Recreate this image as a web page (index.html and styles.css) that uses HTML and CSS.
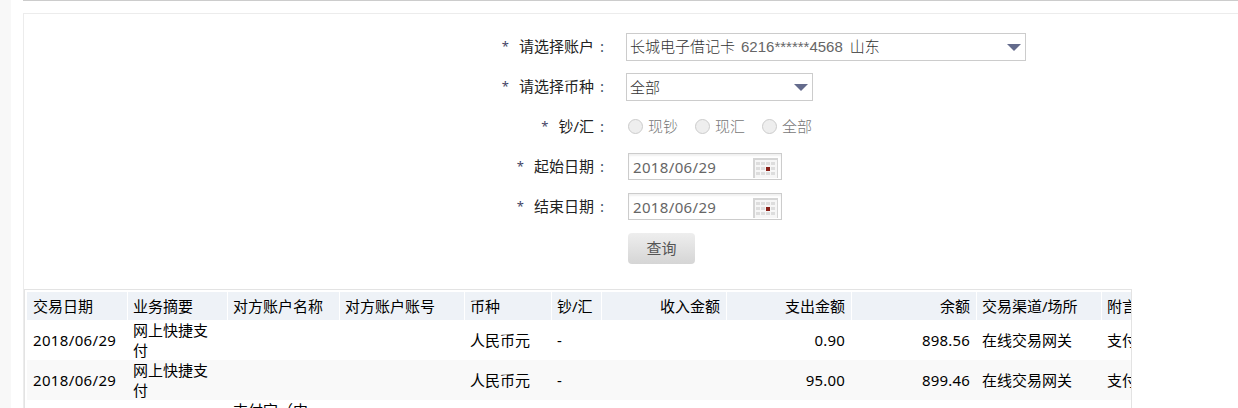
FILE: index.html
```html
<!DOCTYPE html>
<html lang="zh-CN">
<head>
<meta charset="utf-8">
<title>交易查询</title>
<link rel="stylesheet" href="styles.css">
</head>
<body>
<div class="page">
  <main class="content">
    <section class="panel">
      <form class="query">
        <div class="row"><div class="label"><span class="star">*</span><span class="name">请选择账户</span><span class="colon">:</span></div>
          <div class="select wide"><span class="value">长城电子借记卡<span class="digits">6216******4568</span>山东</span><svg class="arrow" width="14" height="7" viewBox="0 0 14 7"><path d="M0 0H14L7 7Z"/></svg></div></div>
        <div class="row"><div class="label"><span class="star">*</span><span class="name">请选择币种</span><span class="colon">:</span></div>
          <div class="select narrow"><span class="value">全部</span><svg class="arrow" width="14" height="7" viewBox="0 0 14 7"><path d="M0 0H14L7 7Z"/></svg></div></div>
        <div class="row"><div class="label"><span class="star">*</span><span class="name">钞/汇</span><span class="colon">:</span></div>
          <div class="radios"><span class="option"><i class="radio"></i>现钞</span><span class="option"><i class="radio"></i>现汇</span><span class="option"><i class="radio"></i>全部</span></div></div>
        <div class="row"><div class="label"><span class="star">*</span><span class="name">起始日期</span><span class="colon">:</span></div>
          <div class="date"><span>2018/06/29</span><svg class="calendar" width="25" height="20" viewBox="0 0 25 20"><path class="frame" d="M0 0H25V20H0Z"/><path class="sheet" d="M2 2H24V20H2Z"/><path class="days" d="M3 4h4v3H3zM8 4h4v3H8zM13 4h4v3h-4zM18 4h4v3h-4zM3 9h4v3H3zM8 9h4v3H8zM18 9h4v3h-4zM3 14h4v3H3zM8 14h4v3H8zM13 14h4v3h-4zM18 14h4v3h-4z"/><path class="today" d="M13 9h4v4h-4z"/></svg></div></div>
        <div class="row"><div class="label"><span class="star">*</span><span class="name">结束日期</span><span class="colon">:</span></div>
          <div class="date"><span>2018/06/29</span><svg class="calendar" width="25" height="20" viewBox="0 0 25 20"><path class="frame" d="M0 0H25V20H0Z"/><path class="sheet" d="M2 2H24V20H2Z"/><path class="days" d="M3 4h4v3H3zM8 4h4v3H8zM13 4h4v3h-4zM18 4h4v3h-4zM3 9h4v3H3zM8 9h4v3H8zM18 9h4v3h-4zM3 14h4v3H3zM8 14h4v3H8zM13 14h4v3h-4zM18 14h4v3h-4z"/><path class="today" d="M13 9h4v4h-4z"/></svg></div></div>
        <div class="row"><div class="label"></div><button class="submit" type="button">查询</button></div>
      </form>
      <div class="results">
        <table class="grid">
          <colgroup><col class="w101"><col class="w100"><col class="w112"><col class="w125"><col class="w87"><col class="w50"><col class="w125"><col class="w125"><col class="w125"><col class="w125"><col class="w125"></colgroup>
          <thead><tr><th>交易日期</th><th>业务摘要</th><th>对方账户名称</th><th>对方账户账号</th><th>币种</th><th>钞/汇</th><th class="num">收入金额</th><th class="num">支出金额</th><th class="num">余额</th><th>交易渠道/场所</th><th>附言</th></tr></thead>
          <tbody>
            <tr><td class="day">2018/06/29</td><td>网上快捷支付</td><td></td><td></td><td>人民币元</td><td>-</td><td></td><td class="num">0.90</td><td class="num">898.56</td><td>在线交易网关</td><td>支付</td></tr>
            <tr class="alt"><td class="day">2018/06/29</td><td>网上快捷支付</td><td></td><td></td><td>人民币元</td><td>-</td><td></td><td class="num">95.00</td><td class="num">899.46</td><td>在线交易网关</td><td>支付</td></tr>
            <tr><td></td><td></td><td class="payee">支付宝（中</td><td></td><td></td><td></td><td></td><td></td><td></td><td></td><td></td></tr>
          </tbody>
        </table>
      </div>
    </section>
  </main>
</div>
</body>
</html>
```
FILE: styles.css
```css
* { box-sizing: border-box; }
body { margin: 0; background: #fff; color: #333; font: 15px/20px "Noto Sans", "Noto Sans CJK SC", sans-serif; }
.page { height: 408px; overflow: hidden; border-left: 11px solid #f8f8f8; padding-left: 12px; }
.content { border-top: 1px solid #ccc; padding-top: 12px; }
.panel { height: 420px; border: solid #ececec; border-width: 1px 0 0 1px; padding-top: 13px; }
.query { height: 262px; }
.row { height: 40px; display: flex; align-items: center; }
.label { width: 582px; display: flex; justify-content: flex-end; flex: none; padding-bottom: 2px; color: #222; }
.star { margin-right: 10px; color: #446; font-size: 13px; }
.colon { width: 12px; padding-left: 6px; color: #456; }
.select { margin-left: 20px; height: 28px; border: 1px solid #ccc; display: flex; align-items: center; justify-content: space-between; padding: 0 4px 0 3px; color: #333; font-weight: 300; }
.value { display: flex; }
.digits { font-family: "Liberation Sans", sans-serif; margin: 0 7px 0 6px; line-height: 22px; color: #666; }
.wide { width: 400px; }
.narrow { width: 187px; }
.arrow { fill: #646b8c; }
.radios { display: flex; margin-left: 22px; padding-bottom: 2px; color: #777; font-weight: 300; }
.option { width: 67px; display: flex; align-items: center; }
.radio { width: 15px; height: 15px; border: 1px solid #ccc; border-radius: 50%; background: #eee; margin-right: 5px; }
.date { margin-left: 22px; margin-bottom: 1px; width: 154px; height: 27px; border: 1px solid #ccc; box-shadow: inset 0 2px 2px #f1f1f1; display: flex; align-items: center; justify-content: space-between; padding: 0 3px 0 4px; color: #666; letter-spacing: .35px; }
.calendar { margin-top: 2px; }
.frame { fill: #d5d5d5; }
.sheet { fill: #f6f6f6; }
.days { fill: #ddd; }
.today { fill: #8a2018; }
.submit { margin: 3px 0 0 22px; width: 67px; height: 31px; border: 0; border-radius: 4px; padding: 0 0 2px; background: linear-gradient(#eee, #d5d5d5); color: #555; font: 15px/29px "Noto Sans CJK SC", sans-serif; }
.results { width: 1108px; height: 140px; border: 1px solid #e3e3e3; padding: 2px 0 0 2px; overflow: hidden; }
.grid { table-layout: fixed; width: 1200px; border-collapse: separate; border-spacing: 0; color: #000; }
.grid td, .grid th { padding: 0 6px 0 5px; text-align: left; font-weight: 400; height: 40px; vertical-align: middle; }
.grid th { height: 28px; background: #eef2f7; border-right: 1px solid #fff; white-space: nowrap; }
.grid th:first-child, .grid td:first-child { padding-left: 6px; }
.grid .num { text-align: right; }
.grid td.num { padding-right: 7px; letter-spacing: .2px; }
.grid .day { letter-spacing: .35px; }
.grid .payee { padding: 0 5px; vertical-align: top; }
.alt { background: #f9f9f9; }
.w50 { width: 50px; }
.w87 { width: 87px; }
.w100 { width: 100px; }
.w101 { width: 101px; }
.w112 { width: 112px; }
.w125 { width: 125px; }
```
